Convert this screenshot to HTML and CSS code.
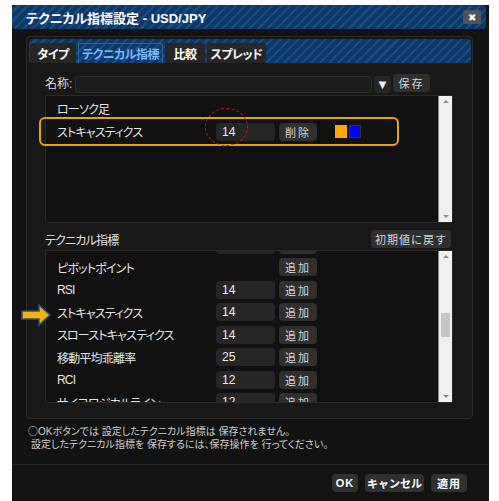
FILE: index.html
```html
<!DOCTYPE html>
<html lang="ja">
<head>
  <meta charset="UTF-8" />
  <title>テクニカル指標設定 - USD/JPY</title>
  <link rel="stylesheet" href="styles.css">
</head>
<body>

  <div class="dialog">
    <div class="titlebar stripes">
      <span class="title">テクニカル指標設定 - USD/JPY</span>
      <span class="close">✖</span>
    </div>

    <div class="panel">
      <!-- Tabs -->
      <div class="tabs stripes">
        <div class="tab t1">タイプ</div>
        <div class="tab t2 active stripes">テクニカル指標</div>
        <div class="tab t3">比較</div>
        <div class="tab t4">スプレッド</div>
      </div>

      <!-- Name -->
      <div class="name-row">
        <span class="name-label">名称:</span>
        <div class="name-input"></div>
        <div class="dropdown">▼</div>
        <button class="btn save-btn">保存</button>
      </div>

      <!-- Selected indicators -->
      <div class="list upper">
        <div class="list-body">
          <div class="item plain">ローソク足</div>
          <div class="item selected">
            <span class="label">ストキャスティクス</span>
            <span class="num">14</span>
            <button class="btn small">削除</button>
            <span class="swatch orange"></span>
            <span class="swatch blue"></span>
            <span class="mark"></span>
          </div>
        </div>
        <div class="scrollbar">
          <span class="arrow up"></span>
          <span class="arrow down"></span>
        </div>
      </div>

      <div class="section-head">
        <span>テクニカル指標</span>
        <button class="btn reset-btn">初期値に戻す</button>
      </div>

      <!-- Available indicators -->
      <div class="list lower">
        <div class="list-body">
          <div class="rows">
            <div class="item"><span class="label"></span><span class="num"></span><span class="btn small"></span></div>
            <div class="item"><span class="label">ピボットポイント</span><span></span><button class="btn small">追加</button></div>
            <div class="item"><span class="label">RSI</span><span class="num">14</span><button class="btn small">追加</button></div>
            <div class="item"><span class="label">ストキャスティクス</span><span class="num">14</span><button class="btn small">追加</button></div>
            <div class="item"><span class="label">スローストキャスティクス</span><span class="num">14</span><button class="btn small">追加</button></div>
            <div class="item"><span class="label">移動平均乖離率</span><span class="num">25</span><button class="btn small">追加</button></div>
            <div class="item"><span class="label">RCI</span><span class="num">12</span><button class="btn small">追加</button></div>
            <div class="item"><span class="label">サイコロジカルライン</span><span class="num">12</span><button class="btn small">追加</button></div>
          </div>
        </div>
        <div class="scrollbar">
          <span class="arrow up"></span>
          <span class="thumb"></span>
          <span class="arrow down"></span>
        </div>
      </div>
    </div>

    <div class="notes">
      <p><span class="circle">○</span>OKボタンでは 設定したテクニカル指標は 保存されません。</p>
      <p class="indent">設定したテクニカル指標を 保存するには、保存操作を 行ってください。</p>
    </div>

    <div class="footer">
      <button class="btn foot ok">OK</button>
      <button class="btn foot cancel">キャンセル</button>
      <button class="btn foot apply">適用</button>
    </div>

    <!-- pointer arrow -->
    <svg class="pointer" width="32" height="24" viewBox="0 0 32 24">
      <path d="M1 8 H18 V2 L29 12 L18 22 V16 H1 Z" fill="#f5b400" stroke="#2c4c7c" stroke-width="1.5" stroke-linejoin="miter"/>
    </svg>
  </div>

</body>
</html>
```

FILE: styles.css
```css
body {
  margin: 0;
  background-color: #fff;
  font-family: "Liberation Sans", "Noto Sans CJK JP", sans-serif;
  font-feature-settings: "palt";
  color: #e6e6e6;
}

.stripes {
  background: repeating-linear-gradient(135deg, #0c3867 0 4.2px, #184b81 4.2px 6.4px);
}

.dialog {
  position: relative;
  margin: 5px 0 0 12px;
  width: 477px;
  height: 496px;
  background-color: #121212;
  display: flex;
  flex-direction: column;
}

.titlebar {
  height: 24px;
  margin-right: 3px;
  border-radius: 4px;
  display: flex;
  align-items: center;
  justify-content: space-between;
  padding: 0 5px 0 14px;
}

.title {
  font-size: 13px;
  font-weight: bold;
  color: #fff;
}

.close {
  width: 18px;
  height: 14px;
  background-color: #4a5462;
  border-radius: 2px;
  color: #fff;
  font-size: 10px;
  display: flex;
  align-items: center;
  justify-content: center;
}

.panel {
  margin: 7px 0 0 14px;
  width: 447px;
  height: 383px;
  box-sizing: border-box;
  border: 1px solid #2a2a2a;
  border-radius: 4px;
  background-color: #181818;
  display: flex;
  flex-direction: column;
}

.tabs {
  margin: 2px 1px 0 2px;
  height: 24px;
  border-radius: 4px;
  display: flex;
  align-items: flex-end;
  gap: 2px;
  padding-left: 1px;
}

.tab {
  height: 20px;
  box-sizing: border-box;
  background-color: #262626;
  border-radius: 3px 3px 0 0;
  font-size: 12px;
  font-weight: bold;
  letter-spacing: -0.5px;
  color: #fff;
  display: flex;
  align-items: center;
  justify-content: center;
}

.tab.active {
  border: 1px solid #2c64a6;
  border-bottom: none;
  color: #79b9ff;
}

.t1 { width: 46px; }
.t2 { width: 85px; }
.t3 { width: 40px; }
.t4 { width: 59px; }

.name-row {
  margin-top: 11px;
  padding-left: 18px;
  height: 19px;
  display: flex;
  align-items: flex-start;
}

.name-label {
  width: 30px;
  font-size: 12px;
  line-height: 20px;
  color: #ddd;
}

.name-input {
  margin-top: 2px;
  width: 297px;
  height: 17px;
  box-sizing: border-box;
  border: 1px solid #2e2e2e;
  border-radius: 4px;
  background-color: #1d1d1d;
}

.dropdown {
  margin: 2px 2px 0 2px;
  width: 17px;
  height: 17px;
  border-radius: 3px;
  background-color: #262626;
  color: #eee;
  font-size: 13px;
  display: flex;
  align-items: center;
  justify-content: center;
}

.btn {
  border: none;
  border-radius: 4px;
  background-color: #2f2f2f;
  color: #d8d8d8;
  font-family: "Liberation Sans", "Noto Sans CJK JP", sans-serif;
  font-size: 11px;
  letter-spacing: 2px;
  padding: 0;
  cursor: pointer;
}

.save-btn {
  width: 37px;
  height: 18px;
}

.list {
  margin-left: 18px;
  width: 408px;
  box-sizing: border-box;
  border: 1px solid #2a2a2a;
  border-radius: 0 0 3px 3px;
  background-color: #111;
  display: flex;
}

.upper {
  margin-top: 2px;
  height: 128px;
}

.lower {
  margin-top: 2px;
  height: 153px;
}

.list-body {
  flex: 1;
}

.lower .list-body {
  overflow: hidden;
}

.rows {
  margin-top: -17.5px;
}

.item {
  display: grid;
  grid-template-columns: 159px 63px 38px;
  align-items: center;
  height: 22.5px;
  padding-left: 11px;
  font-size: 12px;
  letter-spacing: -0.8px;
  color: #e4e4e4;
}

.item.plain {
  display: block;
  height: 21px;
  padding-top: 6px;
  box-sizing: border-box;
  line-height: 16px;
}

.item.selected {
  position: relative;
  margin-left: -7px;
  width: 360px;
  height: 29px;
  box-sizing: border-box;
  padding-left: 16px;
  border: 2px solid #e0a800;
  border-radius: 6px;
  grid-template-columns: 159px 63px 38px 30px 14px;
}

.item .swatch.orange {
  justify-self: end;
}

.num {
  width: 59px;
  height: 18px;
  box-sizing: border-box;
  line-height: 18px;
  padding-left: 6px;
  border-radius: 4px;
  background-color: #262626;
  letter-spacing: 0;
  color: #eee;
}

.small {
  display: block;
  width: 38px;
  height: 18px;
}

.swatch {
  width: 12px;
  height: 13px;
  box-sizing: border-box;
}

.orange {
  background-color: #ffa500;
}

.blue {
  justify-self: end;
  background-color: #0000ff;
  border: 1px solid #333;
}

.mark {
  position: absolute;
  left: 164px;
  top: -11px;
  width: 43px;
  height: 38px;
  box-sizing: border-box;
  border: 1.5px dashed #d41818;
  border-radius: 50%;
}

.scrollbar {
  position: relative;
  width: 13px;
  background-color: #f0f0f0;
  border-left: 1px solid #888;
}

.arrow {
  position: absolute;
  left: 4px;
  width: 0;
  height: 0;
  border-left: 3px solid transparent;
  border-right: 3px solid transparent;
}

.arrow.up {
  top: 4px;
  border-bottom: 3px solid #8a8a8a;
}

.arrow.down {
  bottom: 4px;
  border-top: 3px solid #8a8a8a;
}

.thumb {
  position: absolute;
  left: 2px;
  top: 62px;
  width: 9px;
  height: 24px;
  background-color: #c6c6c6;
}

.section-head {
  margin: 7px 21px 0 18px;
  height: 18px;
  display: flex;
  justify-content: space-between;
  align-items: center;
  font-size: 12px;
  letter-spacing: -0.8px;
  color: #e0e0e0;
}

.reset-btn {
  width: 80px;
  height: 18px;
  letter-spacing: 1px;
}

.notes {
  margin: 5px 0 0 16px;
  height: 40px;
  font-size: 10px;
  line-height: 13px;
  color: #cfcfcf;
}

.notes p {
  margin: 0;
}

.circle {
  font-family: "Noto Sans CJK JP", sans-serif;
}

.notes .indent {
  padding-left: 3px;
}

.footer {
  flex: 1;
  border-top: 1px solid #262626;
  background-color: #131313;
  display: flex;
  justify-content: flex-end;
  align-items: flex-start;
  gap: 7px;
  padding: 9px 22px 0 0;
}

.foot {
  height: 18px;
  font-weight: bold;
  color: #fff;
  background-color: #303030;
  letter-spacing: 1px;
}

.ok { width: 26px; }
.cancel { width: 59px; letter-spacing: 0; }
.apply { width: 36px; }

.pointer {
  position: absolute;
  left: 9px;
  top: 298px;
}
```
